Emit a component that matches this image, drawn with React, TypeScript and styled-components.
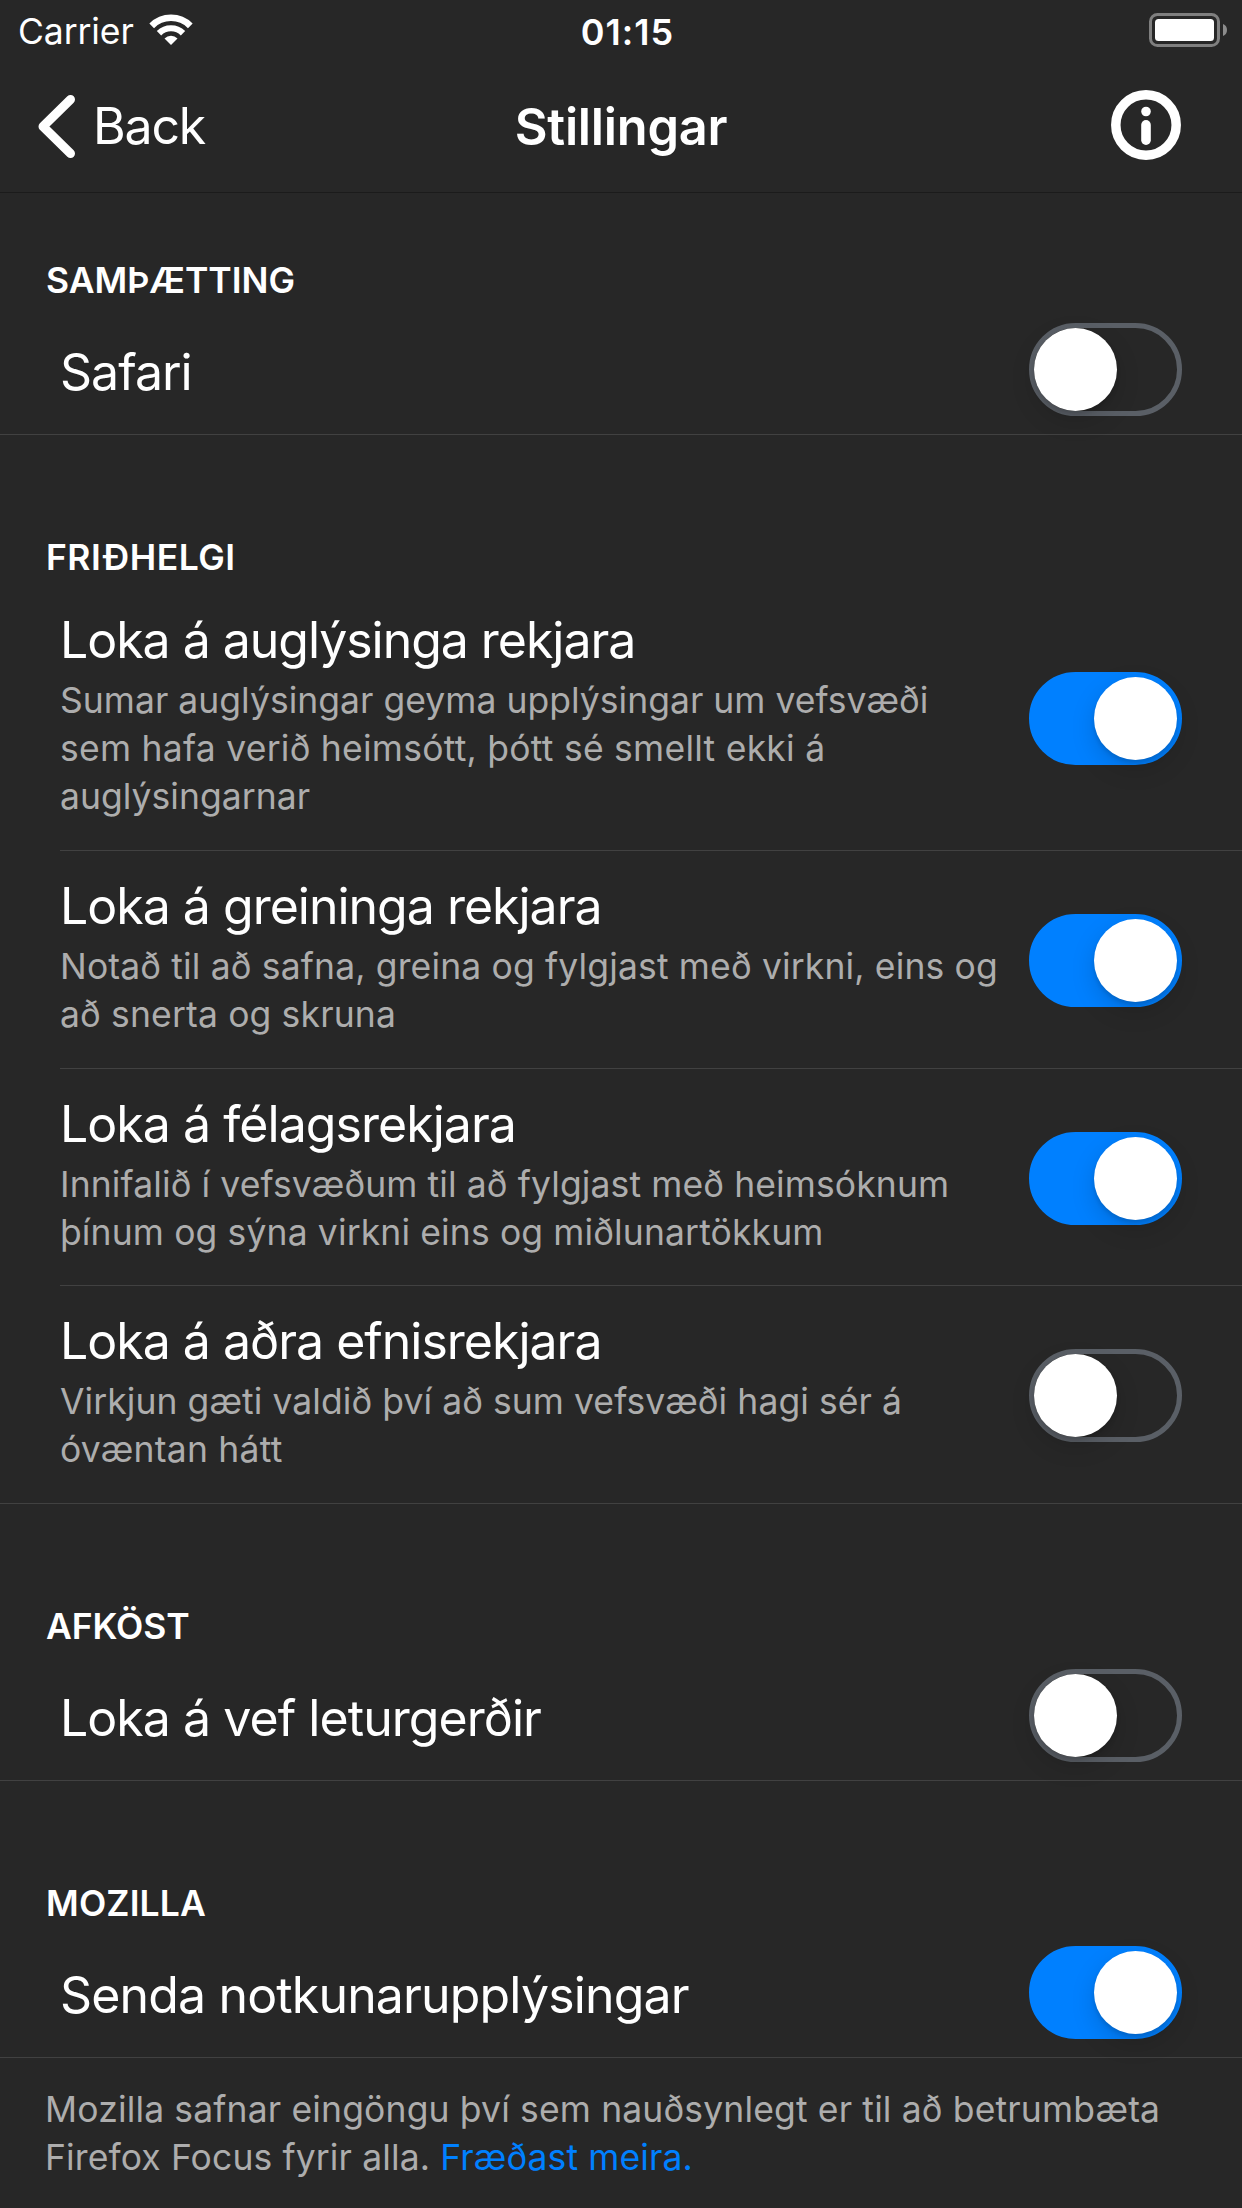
import React, { useState } from "react";
import styled, { createGlobalStyle } from "styled-components";

const color = {
  background: "#272727",
  text: "#ffffff",
  muted: "#adadad",
  blue: "#0080ff",
  rule: "#414141",
  headerRule: "#1b1b1b",
  track: "#5a5f66",
};

const GlobalStyle = createGlobalStyle`
  * { box-sizing: border-box; }
  body {
    margin: 0;
    background: ${color.background};
    font-family: Inter, "Liberation Sans", sans-serif;
    color: ${color.text};
  }
`;

const Screen = styled.main`
  width: 1242px;
  height: 2208px;
  overflow: hidden;
  background: ${color.background};
`;

const StatusBar = styled.div`
  display: grid;
  grid-template-columns: 1fr auto 1fr;
  height: 60px;
  padding: 0 15px 0 18px;
  line-height: 64px;
  font-size: 35.5px;
`;

const Carrier = styled.div`
  display: flex;
  align-items: flex-start;
  letter-spacing: -0.1px;
`;

const WifiIcon = styled.svg`
  width: 44px;
  height: 32px;
  margin: 14px 0 0 15px;
`;

const Clock = styled.time`
  margin-left: 10px;
  font-size: 36px;
  font-weight: 600;
  letter-spacing: 1px;
`;

const BatteryIcon = styled.svg`
  width: 78px;
  height: 34px;
  margin-top: 13px;
  justify-self: end;
`;

const NavBar = styled.header`
  display: grid;
  grid-template-columns: 1fr auto 1fr;
  height: 133px;
  padding: 0 61px 0 36px;
  border-bottom: 1px solid ${color.headerRule};
`;

const BackButton = styled.button`
  display: flex;
  align-items: flex-start;
  padding: 0;
  border: 0;
  background: none;
  color: inherit;
  font: inherit;
  font-size: 50px;
  line-height: 132px;
  letter-spacing: -1.2px;
  text-align: left;
  height: 132px;
`;

const ChevronIcon = styled.svg`
  width: 42px;
  height: 66px;
  margin: 33px 15px 0 0;
`;

const NavTitle = styled.h1`
  margin: 0 0 0 25px;
  font-size: 50.5px;
  font-weight: 600;
  line-height: 134px;
  letter-spacing: -0.25px;
`;

const InfoButton = styled.button`
  justify-self: end;
  width: 70px;
  height: 70px;
  margin-top: 30px;
  padding: 0;
  border: 0;
  background: none;

  svg {
    display: block;
  }
`;

const Section = styled.section<{ $first?: boolean }>`
  padding-top: ${(p) => (p.$first ? 63 : 98)}px;
`;

const SectionTitle = styled.h2<{ $track: number }>`
  height: 50px;
  margin: 0;
  padding-left: 46px;
  font-size: 35.5px;
  font-weight: 600;
  line-height: 50px;
  letter-spacing: ${(p) => p.$track}px;
`;

const Row = styled.div<{ $height: number; $last: boolean }>`
  display: flex;
  justify-content: space-between;
  height: ${(p) => p.$height}px;
  margin-left: ${(p) => (p.$last ? 0 : 60)}px;
  padding: 0 60px 0 ${(p) => (p.$last ? 60 : 0)}px;
  border-bottom: 1px solid ${color.rule};
`;

const RowText = styled.div<{ $top: number }>`
  padding-top: ${(p) => p.$top}px;
  white-space: nowrap;
`;

const RowTitle = styled.div<{ $track: number }>`
  height: 60px;
  font-size: 50px;
  line-height: 60px;
  letter-spacing: ${(p) => p.$track}px;
`;

const Description = styled.div`
  margin-top: 7px;
  color: ${color.muted};
  font-size: 35.5px;
  line-height: 48px;
`;

const Line = styled.div<{ $track: number }>`
  letter-spacing: ${(p) => p.$track}px;
`;

const Toggle = styled.button<{ $on: boolean; $top: number }>`
  flex: none;
  display: flex;
  justify-content: ${(p) => (p.$on ? "flex-end" : "flex-start")};
  width: 153px;
  height: 93px;
  margin-top: ${(p) => p.$top}px;
  padding: 0;
  border: 5px solid ${(p) => (p.$on ? color.blue : color.track)};
  border-radius: 47px;
  background: ${(p) => (p.$on ? color.blue : "transparent")};
`;

const Knob = styled.span`
  width: 83px;
  height: 83px;
  border-radius: 50%;
  background: #ffffff;
  box-shadow: 0 9px 24px rgba(0, 0, 0, 0.15), 0 3px 4px rgba(0, 0, 0, 0.12);
`;

const Footer = styled.footer`
  padding: 28px 0 0 45px;
  color: ${color.muted};
  font-size: 35.5px;
  line-height: 48px;
  white-space: nowrap;
`;

const Link = styled.a`
  color: ${color.blue};
  text-decoration: none;
`;

type TextLine = { text: string; track: number };

type Setting = {
  title: string;
  track: number;
  lines: TextLine[];
  on: boolean;
  height: number;
  textTop: number;
  toggleTop: number;
};

type Group = { heading: string; track: number; settings: Setting[] };

const groups: Group[] = [
  {
    heading: "SAMÞÆTTING",
    track: -0.05,
    settings: [
      { title: "Safari", track: -1, lines: [], on: false, height: 129, textTop: 36, toggleTop: 17 },
    ],
  },
  {
    heading: "FRIÐHELGI",
    track: 0.5,
    settings: [
      {
        title: "Loka á auglýsinga rekjara",
        track: -1.04,
        lines: [
          { text: "Sumar auglýsingar geyma upplýsingar um vefsvæði", track: 0.03 },
          { text: "sem hafa verið heimsótt, þótt sé smellt ekki á", track: 0.25 },
          { text: "auglýsingarnar", track: 0.03 },
        ],
        on: true,
        height: 268,
        textTop: 27,
        toggleTop: 89,
      },
      {
        title: "Loka á greininga rekjara",
        track: -1,
        lines: [
          { text: "Notað til að safna, greina og fylgjast með virkni, eins og", track: 0.15 },
          { text: "að snerta og skruna", track: 0.15 },
        ],
        on: true,
        height: 218,
        textTop: 25,
        toggleTop: 63,
      },
      {
        title: "Loka á félagsrekjara",
        track: -0.96,
        lines: [
          { text: "Innifalið í vefsvæðum til að fylgjast með heimsóknum", track: 0.11 },
          { text: "þínum og sýna virkni eins og miðlunartökkum", track: 0.13 },
        ],
        on: true,
        height: 217,
        textTop: 25,
        toggleTop: 63,
      },
      {
        title: "Loka á aðra efnisrekjara",
        track: -1,
        lines: [
          { text: "Virkjun gæti valdið því að sum vefsvæði hagi sér á", track: 0.07 },
          { text: "óvæntan hátt", track: 0.22 },
        ],
        on: false,
        height: 218,
        textTop: 25,
        toggleTop: 63,
      },
    ],
  },
  {
    heading: "AFKÖST",
    track: -0.1,
    settings: [
      { title: "Loka á vef leturgerðir", track: -0.95, lines: [], on: false, height: 129, textTop: 36, toggleTop: 17 },
    ],
  },
  {
    heading: "MOZILLA",
    track: 0.15,
    settings: [
      { title: "Senda notkunarupplýsingar", track: -0.84, lines: [], on: true, height: 129, textTop: 36, toggleTop: 17 },
    ],
  },
];

function SettingRow({ setting, last }: { setting: Setting; last: boolean }) {
  const [on, setOn] = useState(setting.on);
  return (
    <Row $height={setting.height} $last={last}>
      <RowText $top={setting.textTop}>
        <RowTitle $track={setting.track}>{setting.title}</RowTitle>
        {setting.lines.length > 0 && (
          <Description>
            {setting.lines.map((line) => (
              <Line key={line.text} $track={line.track}>
                {line.text}
              </Line>
            ))}
          </Description>
        )}
      </RowText>
      <Toggle
        $on={on}
        $top={setting.toggleTop}
        role="switch"
        aria-checked={on}
        aria-label={setting.title}
        onClick={() => setOn(!on)}
      >
        <Knob />
      </Toggle>
    </Row>
  );
}

export default function App() {
  return (
    <Screen>
      <GlobalStyle />
      <StatusBar>
        <Carrier>
          <span>Carrier</span>
          <WifiIcon viewBox="0 0 44 32" fill="none" stroke="#fff">
            <path d="M2.7 11.8 A27.3 27.3 0 0 1 41.3 11.8" strokeWidth="6.6" />
            <path d="M10 19.2 A17 17 0 0 1 34 19.2" strokeWidth="6.2" />
            <path d="M22 31 L15.5 24.5 A9.2 9.2 0 0 1 28.5 24.5 Z" fill="#fff" stroke="none" />
          </WifiIcon>
        </Carrier>
        <Clock>01:15</Clock>
        <BatteryIcon viewBox="0 0 78 34">
          <rect x="1.5" y="1.5" width="68" height="31" rx="7" fill="none" stroke="#7f7f7f" strokeWidth="3" />
          <rect x="6" y="6" width="59" height="22" rx="3.5" fill="#fff" />
          <path d="M74 11 A6.5 6.5 0 0 1 74 23 Z" fill="#8c8c8c" />
        </BatteryIcon>
      </StatusBar>
      <NavBar>
        <BackButton>
          <ChevronIcon viewBox="0 0 42 66">
            <path
              d="M34.5 6.5 L7 33.5 L34.5 60.5"
              fill="none"
              stroke="#fff"
              strokeWidth="9"
              strokeLinecap="round"
              strokeLinejoin="round"
            />
          </ChevronIcon>
          <span>Back</span>
        </BackButton>
        <NavTitle>Stillingar</NavTitle>
        <InfoButton aria-label="Info">
          <svg width="70" height="70" viewBox="0 0 70 70">
            <circle cx="35" cy="35" r="30.2" fill="none" stroke="#fff" strokeWidth="9.5" />
            <circle cx="35" cy="21.5" r="4.8" fill="#fff" />
            <rect x="30.2" y="30" width="9.6" height="25" rx="4.8" fill="#fff" />
          </svg>
        </InfoButton>
      </NavBar>
      {groups.map((group, index) => (
        <Section key={group.heading} $first={index === 0}>
          <SectionTitle $track={group.track}>{group.heading}</SectionTitle>
          {group.settings.map((setting, i) => (
            <SettingRow key={setting.title} setting={setting} last={i === group.settings.length - 1} />
          ))}
        </Section>
      ))}
      <Footer>
        <Line $track={0.15}>Mozilla safnar eingöngu því sem nauðsynlegt er til að betrumbæta</Line>
        <Line $track={0.12}>
          Firefox Focus fyrir alla. <Link>Fræðast meira.</Link>
        </Line>
      </Footer>
    </Screen>
  );
}
